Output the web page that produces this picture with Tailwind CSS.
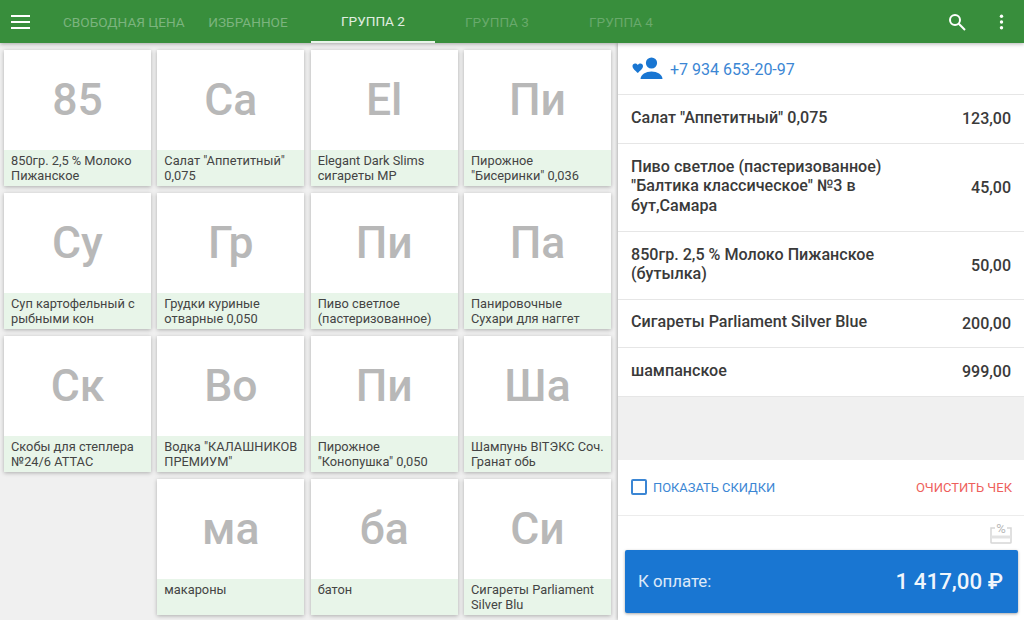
<!DOCTYPE html>
<html lang="ru">
<head>
    <meta charset="UTF-8">
    <title>Касса</title>
    <script src="https://cdn.jsdelivr.net/npm/@tailwindcss/browser@4"></script>
</head>
<body class="w-[1024px] h-[620px] overflow-hidden bg-[#f0f0f0] font-['Roboto',sans-serif]">
    <!-- top bar -->
    <header class="relative z-10 h-[43px] bg-[#388e3c] flex items-stretch text-white shadow-[0_1px_4px_rgba(0,0,0,0.3)]">
        <div class="w-[63px] flex items-center pl-[11px] shrink-0">
            <svg width="20" height="14" viewBox="0 0 20 14" fill="#fff"><rect y="0" width="19" height="2"/><rect y="6" width="19" height="2"/><rect y="12" width="19" height="2"/></svg>
        </div>
        <div class="w-[134px] flex items-center pt-[1px] text-[13.6px] text-white/35 whitespace-nowrap">СВОБОДНАЯ ЦЕНА</div>
        <div class="w-[102px] mr-[12px] flex items-center justify-center pt-[1px] text-[13.6px] text-white/35">ИЗБРАННОЕ</div>
        <div class="w-[124px] flex items-center justify-center pt-[1px] text-[13.6px] text-white/85 border-b-2 border-[#e8f5e9]">ГРУППА 2</div>
        <div class="w-[124px] flex items-center justify-center pt-[1px] text-[13.6px] text-white/25">ГРУППА 3</div>
        <div class="w-[124px] flex items-center justify-center pt-[1px] text-[13.6px] text-white/25">ГРУППА 4</div>
        <div class="ml-auto flex items-center pr-[20px] gap-[33px]">
            <svg width="18" height="18" viewBox="0 0 18 18" fill="none" stroke="#fff" stroke-width="2"><circle cx="7" cy="7" r="5"/><path d="M10.8 10.8 L17 17"/></svg>
            <svg width="5" height="16" viewBox="0 0 5 16" fill="#fff"><circle cx="2.5" cy="2.2" r="1.7"/><circle cx="2.5" cy="8" r="1.7"/><circle cx="2.5" cy="13.8" r="1.7"/></svg>
        </div>
    </header>

    <div class="flex h-[577px]">
        <!-- product grid -->
        <main class="w-[618px] shrink-0 grid grid-cols-[147px_147px_147px_147px] auto-rows-[136px] gap-x-[6.33px] gap-y-[7px] pl-[4px] pt-[7px]">
            <div class="bg-white shadow-[0_1px_4px_rgba(0,0,0,0.28)] flex flex-col">
                <div class="h-[100px] flex items-center justify-center text-[44.5px] font-medium text-[#b8b8b8]">85</div>
                <div class="h-[36px] bg-[#e8f5e9] pl-[7px] pr-[2px] pt-[3px] text-[12.8px] leading-[15px] text-[#444]">850гр. 2,5 % Молоко Пижанское</div>
            </div>
            <div class="bg-white shadow-[0_1px_4px_rgba(0,0,0,0.28)] flex flex-col">
                <div class="h-[100px] flex items-center justify-center text-[44.5px] font-medium text-[#b8b8b8]">Са</div>
                <div class="h-[36px] bg-[#e8f5e9] pl-[7px] pr-[2px] pt-[3px] text-[12.8px] leading-[15px] text-[#444]">Салат "Аппетитный" 0,075</div>
            </div>
            <div class="bg-white shadow-[0_1px_4px_rgba(0,0,0,0.28)] flex flex-col">
                <div class="h-[100px] flex items-center justify-center text-[44.5px] font-medium text-[#b8b8b8]">El</div>
                <div class="h-[36px] bg-[#e8f5e9] pl-[7px] pr-[2px] pt-[3px] text-[12.8px] leading-[15px] text-[#444]">Elegant Dark Slims сигареты MP</div>
            </div>
            <div class="bg-white shadow-[0_1px_4px_rgba(0,0,0,0.28)] flex flex-col">
                <div class="h-[100px] flex items-center justify-center text-[44.5px] font-medium text-[#b8b8b8]">Пи</div>
                <div class="h-[36px] bg-[#e8f5e9] pl-[7px] pr-[2px] pt-[3px] text-[12.8px] leading-[15px] text-[#444]">Пирожное "Бисеринки" 0,036</div>
            </div>

            <div class="bg-white shadow-[0_1px_4px_rgba(0,0,0,0.28)] flex flex-col">
                <div class="h-[100px] flex items-center justify-center text-[44.5px] font-medium text-[#b8b8b8]">Су</div>
                <div class="h-[36px] bg-[#e8f5e9] pl-[7px] pr-[2px] pt-[3px] text-[12.8px] leading-[15px] text-[#444]">Суп картофельный с рыбными кон</div>
            </div>
            <div class="bg-white shadow-[0_1px_4px_rgba(0,0,0,0.28)] flex flex-col">
                <div class="h-[100px] flex items-center justify-center text-[44.5px] font-medium text-[#b8b8b8]">Гр</div>
                <div class="h-[36px] bg-[#e8f5e9] pl-[7px] pr-[2px] pt-[3px] text-[12.8px] leading-[15px] text-[#444]">Грудки куриные отварные 0,050</div>
            </div>
            <div class="bg-white shadow-[0_1px_4px_rgba(0,0,0,0.28)] flex flex-col">
                <div class="h-[100px] flex items-center justify-center text-[44.5px] font-medium text-[#b8b8b8]">Пи</div>
                <div class="h-[36px] bg-[#e8f5e9] pl-[7px] pr-[2px] pt-[3px] text-[12.8px] leading-[15px] text-[#444]">Пиво светлое (пастеризованное)</div>
            </div>
            <div class="bg-white shadow-[0_1px_4px_rgba(0,0,0,0.28)] flex flex-col">
                <div class="h-[100px] flex items-center justify-center text-[44.5px] font-medium text-[#b8b8b8]">Па</div>
                <div class="h-[36px] bg-[#e8f5e9] pl-[7px] pr-[2px] pt-[3px] text-[12.8px] leading-[15px] text-[#444]">Панировочные<br>Сухари для наггет</div>
            </div>

            <div class="bg-white shadow-[0_1px_4px_rgba(0,0,0,0.28)] flex flex-col">
                <div class="h-[100px] flex items-center justify-center text-[44.5px] font-medium text-[#b8b8b8]">Ск</div>
                <div class="h-[36px] bg-[#e8f5e9] pl-[7px] pr-[2px] pt-[3px] text-[12.8px] leading-[15px] text-[#444]">Скобы для степлера №24/6 ATTAC</div>
            </div>
            <div class="bg-white shadow-[0_1px_4px_rgba(0,0,0,0.28)] flex flex-col">
                <div class="h-[100px] flex items-center justify-center text-[44.5px] font-medium text-[#b8b8b8]">Во</div>
                <div class="h-[36px] bg-[#e8f5e9] pl-[7px] pr-[2px] pt-[3px] text-[12.8px] leading-[15px] text-[#444]">Водка "КАЛАШНИКОВ ПРЕМИУМ"</div>
            </div>
            <div class="bg-white shadow-[0_1px_4px_rgba(0,0,0,0.28)] flex flex-col">
                <div class="h-[100px] flex items-center justify-center text-[44.5px] font-medium text-[#b8b8b8]">Пи</div>
                <div class="h-[36px] bg-[#e8f5e9] pl-[7px] pr-[2px] pt-[3px] text-[12.8px] leading-[15px] text-[#444]">Пирожное "Конопушка" 0,050</div>
            </div>
            <div class="bg-white shadow-[0_1px_4px_rgba(0,0,0,0.28)] flex flex-col">
                <div class="h-[100px] flex items-center justify-center text-[44.5px] font-medium text-[#b8b8b8]">Ша</div>
                <div class="h-[36px] bg-[#e8f5e9] pl-[7px] pr-[2px] pt-[3px] text-[12.8px] leading-[15px] text-[#444]">Шампунь ВIТЭКС Соч. Гранат обь</div>
            </div>

            <div></div>
            <div class="bg-white shadow-[0_1px_4px_rgba(0,0,0,0.28)] flex flex-col">
                <div class="h-[100px] flex items-center justify-center text-[44.5px] font-medium text-[#b8b8b8]">ма</div>
                <div class="h-[36px] bg-[#e8f5e9] pl-[7px] pr-[2px] pt-[3px] text-[12.8px] leading-[15px] text-[#444]">макароны</div>
            </div>
            <div class="bg-white shadow-[0_1px_4px_rgba(0,0,0,0.28)] flex flex-col">
                <div class="h-[100px] flex items-center justify-center text-[44.5px] font-medium text-[#b8b8b8]">ба</div>
                <div class="h-[36px] bg-[#e8f5e9] pl-[7px] pr-[2px] pt-[3px] text-[12.8px] leading-[15px] text-[#444]">батон</div>
            </div>
            <div class="bg-white shadow-[0_1px_4px_rgba(0,0,0,0.28)] flex flex-col">
                <div class="h-[100px] flex items-center justify-center text-[44.5px] font-medium text-[#b8b8b8]">Си</div>
                <div class="h-[36px] bg-[#e8f5e9] pl-[7px] pr-[2px] pt-[3px] text-[12.8px] leading-[15px] text-[#444]">Сигареты Parliament Silver Blu</div>
            </div>
        </main>

        <!-- receipt -->
        <aside class="flex-1 flex flex-col bg-white shadow-[-1px_0_3px_rgba(0,0,0,0.25)]">
            <div class="h-[52px] flex items-center pl-[14px] border-b border-[#e6e6e6] shrink-0">
                <svg width="32" height="24" viewBox="0 0 32 24" fill="#1976d2"><path d="M0.5 9 C0.5 6.6 3.8 5.6 5.8 8 C7.8 5.6 11 6.6 11 9 C11 11.8 8 13.8 5.8 16 C3.5 13.8 0.5 11.8 0.5 9 Z"/><circle cx="19.5" cy="6" r="5.6"/><path d="M8.5 22 C8.5 17.5 14 14.5 19.5 14.5 C25 14.5 30.5 17.5 30.5 22 Z"/></svg>
                <span class="ml-[6px] mt-[3px] text-[16px] text-[#3b86d4]">+7 934 653-20-97</span>
            </div>
            <div class="h-[49px] flex justify-between items-center pl-[13px] pr-[13px] border-b border-[#e6e6e6] shrink-0">
                <span class="text-[16.1px] leading-[19.5px] font-medium text-[#3a3a3a] -mt-[3px]">Салат "Аппетитный" 0,075</span>
                <span class="text-[16px] font-medium text-[#3a3a3a]">123,00</span>
            </div>
            <div class="h-[88px] flex justify-between items-center pl-[13px] pr-[13px] border-b border-[#e6e6e6] shrink-0">
                <span class="w-[270px] -mt-[3px] text-[16.1px] leading-[19.5px] font-medium text-[#3a3a3a]">Пиво светлое (пастеризованное) "Балтика классическое" №3 в бут,Самара</span>
                <span class="text-[16px] font-medium text-[#3a3a3a]">45,00</span>
            </div>
            <div class="h-[68px] flex justify-between items-center pl-[13px] pr-[13px] border-b border-[#e6e6e6] shrink-0">
                <span class="w-[270px] -mt-[3px] text-[16.1px] leading-[19.5px] font-medium text-[#3a3a3a]">850гр. 2,5 % Молоко Пижанское (бутылка)</span>
                <span class="text-[16px] font-medium text-[#3a3a3a]">50,00</span>
            </div>
            <div class="h-[48px] flex justify-between items-center pl-[13px] pr-[13px] border-b border-[#e6e6e6] shrink-0">
                <span class="text-[16.1px] leading-[19.5px] font-medium text-[#3a3a3a] -mt-[3px]">Сигареты Parliament Silver Blue</span>
                <span class="text-[16px] font-medium text-[#3a3a3a]">200,00</span>
            </div>
            <div class="h-[48px] flex justify-between items-center pl-[13px] pr-[13px] shrink-0">
                <span class="text-[16.1px] leading-[19.5px] font-medium text-[#3a3a3a] -mt-[3px]">шампанское</span>
                <span class="text-[16px] font-medium text-[#3a3a3a]">999,00</span>
            </div>
            <div class="h-[64px] bg-[#f0f0f0] border-t border-[#e6e6e6] shrink-0"></div>
            <div class="h-[56px] flex items-center justify-between pl-[13px] pr-[12px] border-b border-[#ececec] shrink-0">
                <label class="flex items-center text-[12.9px] text-[#3b86d4]">
                    <span class="w-[16px] h-[16px] border-2 border-[#3b86d4] rounded-[2px] mr-[6px]"></span>
                    ПОКАЗАТЬ СКИДКИ
                </label>
                <span class="text-[13px] text-[#ee5f5c]">ОЧИСТИТЬ ЧЕК</span>
            </div>
            <div class="h-[34px] flex justify-end items-start pr-[12px] shrink-0">
                <div class="relative w-[22px] h-[22px] mt-[6px]">
                    <svg width="22" height="22" viewBox="0 0 22 22" fill="none" stroke="#d6d6d6" stroke-width="1.5"><path d="M5 6 H1 V20.5 Q1 21 2 21 H20 Q21 21 21 20.5 V6 H17"/><path d="M1 15 H21" stroke-width="3" stroke="#e2e2e2"/></svg>
                    <span class="absolute top-[0px] left-0 w-full text-center text-[13px] leading-[13px] text-[#b8b8b8]">%</span>
                </div>
            </div>
            <button class="ml-[7px] mr-[6px] h-[63px] bg-[#1976d2] rounded-[2px] shadow-[0_1px_3px_rgba(0,0,0,0.35)] flex items-center justify-between pl-[13px] pr-[15px] shrink-0">
                <span class="text-[16.8px] text-white/85">К оплате:</span>
                <span class="text-[22.3px] font-medium text-white/95">1 417,00 ₽</span>
            </button>
        </aside>
    </div>
</body>
</html>
